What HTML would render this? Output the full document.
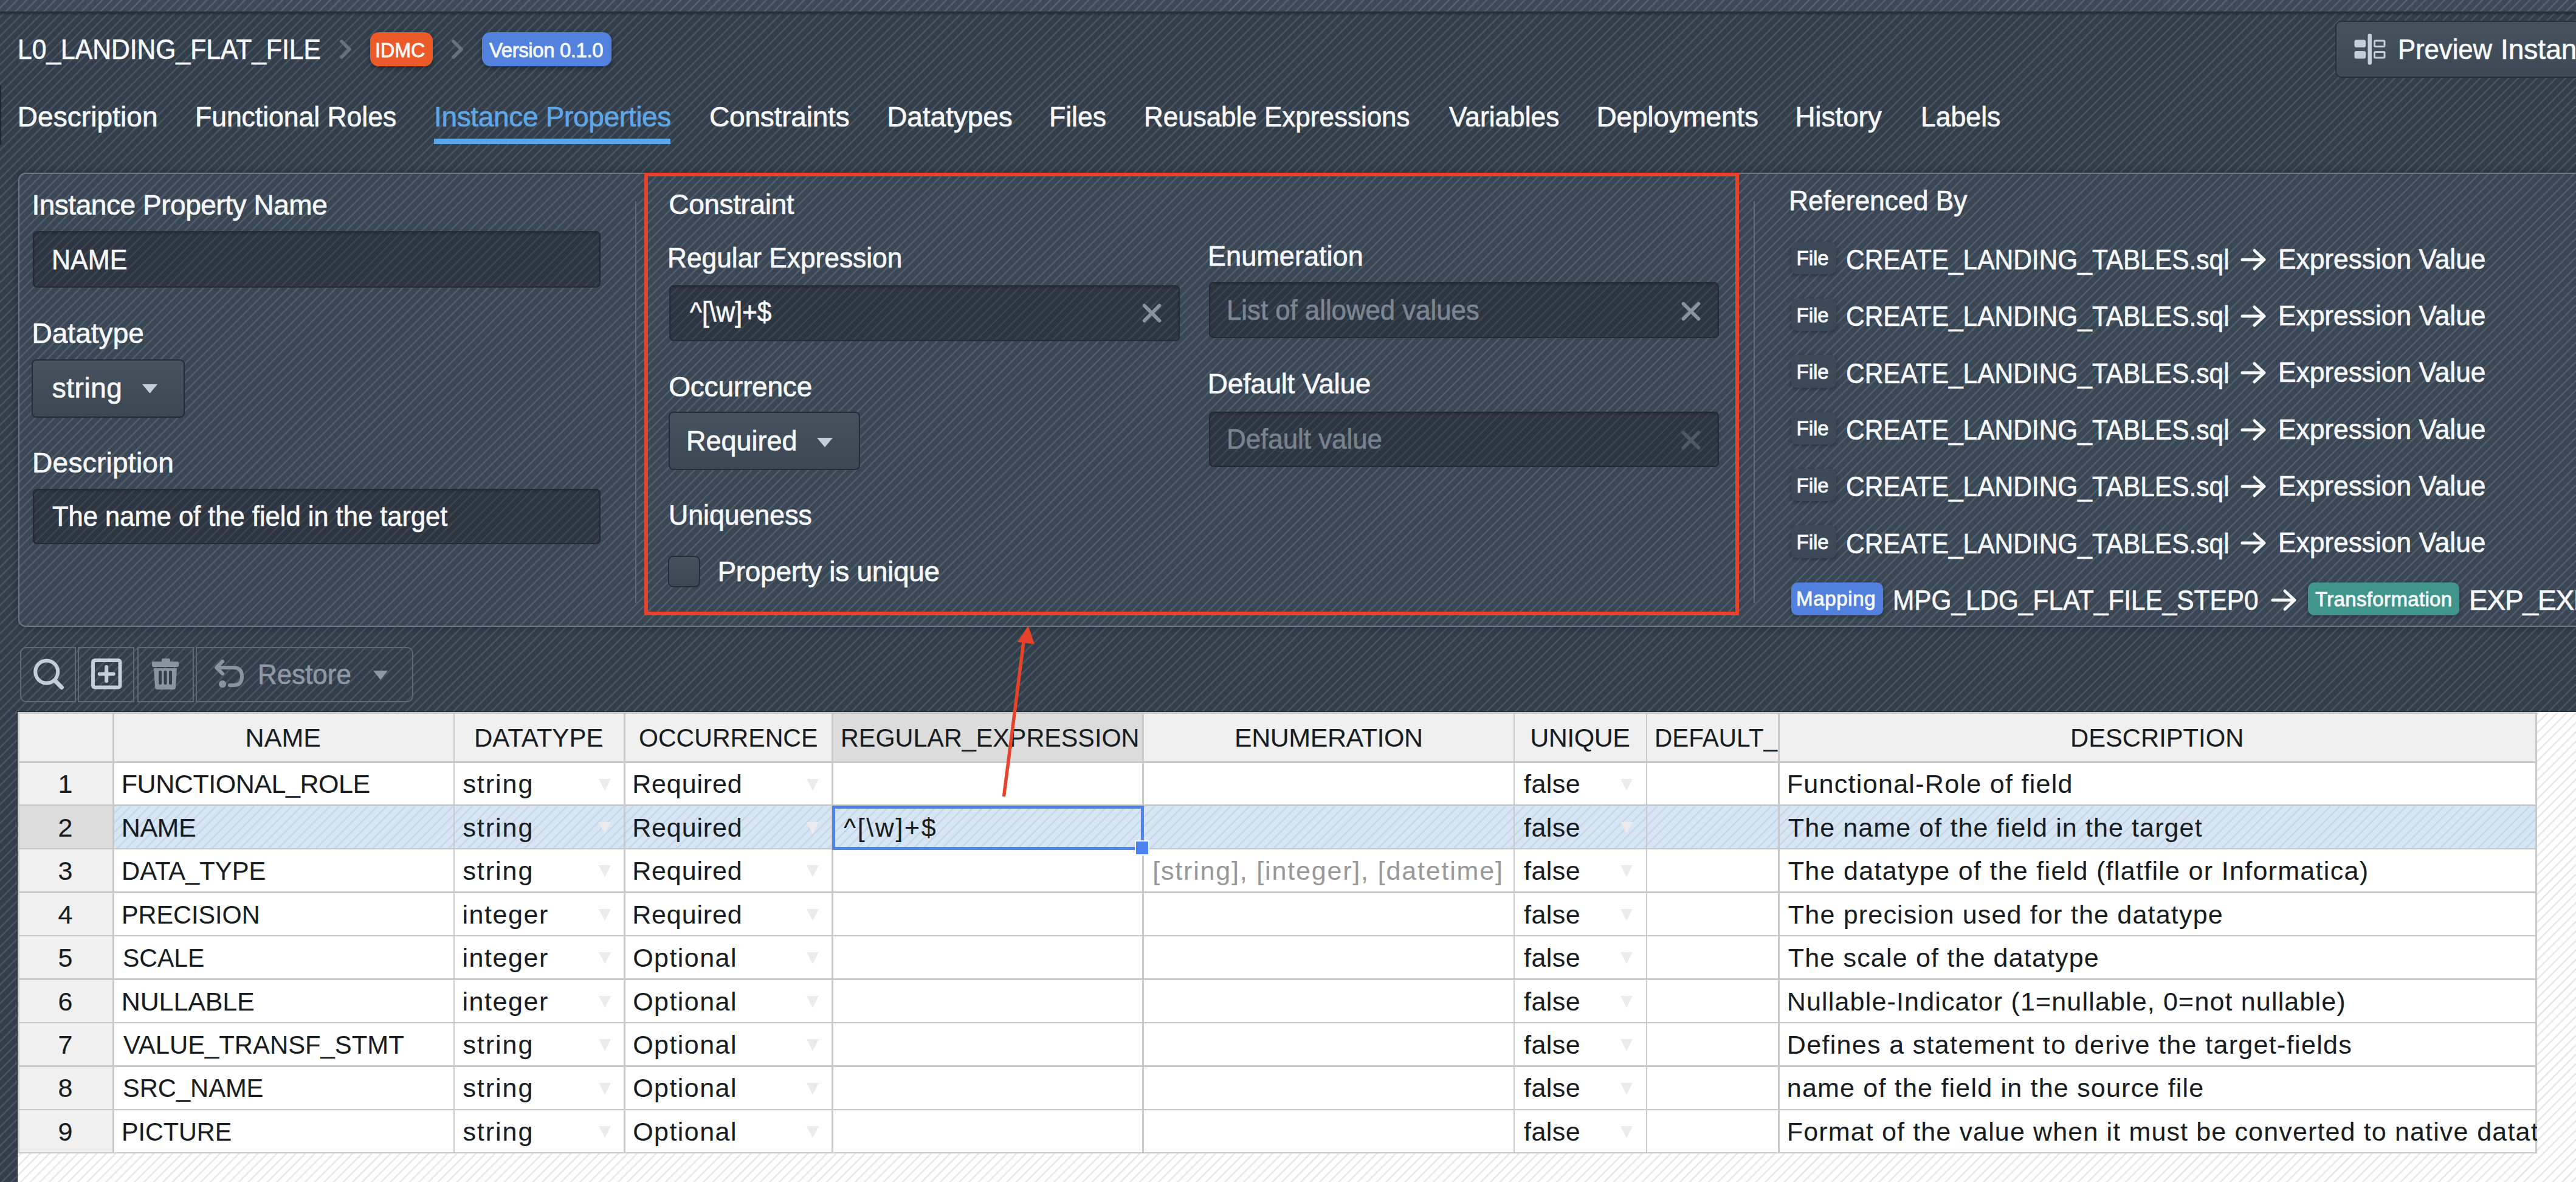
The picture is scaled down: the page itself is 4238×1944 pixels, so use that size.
<!DOCTYPE html>
<html><head><meta charset="utf-8">
<style>
*{box-sizing:border-box;margin:0;padding:0}
html,body{width:4238px;height:1944px;overflow:hidden}
body{position:relative;font-family:"Liberation Sans",sans-serif;color:#f5f7f9;background:#313d49}
.abs{position:absolute}
.t{position:absolute;white-space:pre;line-height:1;font-family:"Liberation Sans",sans-serif;-webkit-text-stroke:0.7px currentColor}
.k{-webkit-text-stroke:0.2px currentColor}
svg{position:absolute;overflow:visible}

</style></head><body>
<div class="abs" style="left:0.00px;top:0.00px;width:4238.00px;height:1944.00px;background-image:repeating-linear-gradient(135deg,#323e4a 0px,#323e4a 7.13px,#4a5663 8.53px,#4a5663 9.63px,#323e4a 11.03px);background-attachment:fixed;"></div>
<div class="abs" style="left:0.00px;top:0.00px;width:4238.00px;height:19.00px;background-image:repeating-linear-gradient(135deg,#3c4956 0px,#3c4956 7.13px,#56626e 8.53px,#56626e 9.63px,#3c4956 11.03px);background-attachment:fixed;"></div>
<div class="abs" style="left:0.00px;top:19.00px;width:4238.00px;height:2.50px;background:#28303a;box-shadow:0 1px 3px rgba(10,15,20,0.45);"></div>
<div class="abs" style="left:0.00px;top:140.00px;width:1.50px;height:98.00px;background:#1f2831;"></div>
<div class="t" style="left:29.00px;top:58.05px;font-size:46px;letter-spacing:0.000px;transform:scaleX(0.9262);transform-origin:0 0;">L0_LANDING_FLAT_FILE</div>
<svg style="left:558px;top:64px" width="22" height="34" viewBox="0 0 22 34"><path d="M4 4 L17 17 L4 30" fill="none" stroke="#66737f" stroke-width="5.5" stroke-linecap="round" stroke-linejoin="round"/></svg>
<svg style="left:742px;top:64px" width="22" height="34" viewBox="0 0 22 34"><path d="M4 4 L17 17 L4 30" fill="none" stroke="#66737f" stroke-width="5.5" stroke-linecap="round" stroke-linejoin="round"/></svg>
<div class="abs" style="left:609.00px;top:53.00px;width:103.00px;height:56.00px;background:#eb5a28;border-radius:14px;box-shadow:0 3px 8px rgba(0,0,0,0.35);"></div>
<div class="t" style="left:617.00px;top:66.06px;font-size:33px;letter-spacing:0.000px;transform:scaleX(0.9756);transform-origin:0 0;-webkit-text-stroke:0.9px currentColor;">IDMC</div>
<div class="abs" style="left:793.00px;top:53.00px;width:213.00px;height:56.00px;background:#5281de;border-radius:14px;box-shadow:0 3px 8px rgba(0,0,0,0.35);"></div>
<div class="t" style="left:805.00px;top:66.06px;font-size:33px;letter-spacing:-0.417px;-webkit-text-stroke:0.9px currentColor;">Version 0.1.0</div>
<div class="abs" style="left:3842.00px;top:34.00px;width:458.00px;height:94.00px;background:linear-gradient(#46535f,#3c4955);border:2px solid #28313a;border-radius:10px;"></div>
<svg style="left:3872px;top:55px" width="54" height="52" viewBox="0 0 54 52">
<rect x="1.5" y="10.5" width="18.5" height="12.5" rx="3" fill="#c5ced6"/>
<rect x="1.5" y="29" width="18.5" height="12.5" rx="3" fill="#c5ced6"/>
<rect x="23.5" y="0.5" width="6.5" height="51" rx="3" fill="#c5ced6"/>
<rect x="34.5" y="12" width="16.5" height="9.5" rx="1.5" fill="none" stroke="#c5ced6" stroke-width="3"/>
<rect x="34.5" y="30.5" width="16.5" height="9.5" rx="1.5" fill="none" stroke="#c5ced6" stroke-width="3"/>
</svg>
<div class="t" style="left:3945.00px;top:58.05px;font-size:46px;letter-spacing:0.000px;transform:scaleX(0.9481);transform-origin:0 0;">Preview</div>
<div class="t" style="left:4114.00px;top:58.05px;font-size:46px;letter-spacing:0.000px;">Instance</div>
<div class="t" style="left:28.80px;top:168.85px;font-size:46px;letter-spacing:0.060px;">Description</div>
<div class="t" style="left:321.30px;top:168.85px;font-size:46px;letter-spacing:0.000px;transform:scaleX(0.9664);transform-origin:0 0;">Functional Roles</div>
<div class="t" style="left:714.00px;top:168.85px;font-size:46px;letter-spacing:-0.333px;color:#5ea8e9;">Instance Properties</div>
<div class="t" style="left:1167.00px;top:168.85px;font-size:46px;letter-spacing:-0.200px;">Constraints</div>
<div class="t" style="left:1459.20px;top:168.85px;font-size:46px;letter-spacing:-0.075px;">Datatypes</div>
<div class="t" style="left:1726.00px;top:168.85px;font-size:46px;letter-spacing:0.000px;transform:scaleX(0.9677);transform-origin:0 0;">Files</div>
<div class="t" style="left:1881.50px;top:168.85px;font-size:46px;letter-spacing:0.000px;transform:scaleX(0.9560);transform-origin:0 0;">Reusable Expressions</div>
<div class="t" style="left:2384.00px;top:168.85px;font-size:46px;letter-spacing:0.000px;transform:scaleX(0.9630);transform-origin:0 0;">Variables</div>
<div class="t" style="left:2626.50px;top:168.85px;font-size:46px;letter-spacing:-0.200px;">Deployments</div>
<div class="t" style="left:2953.20px;top:168.85px;font-size:46px;letter-spacing:-0.095px;">History</div>
<div class="t" style="left:3159.90px;top:168.85px;font-size:46px;letter-spacing:0.000px;transform:scaleX(0.9687);transform-origin:0 0;">Labels</div>
<div class="abs" style="left:714.00px;top:227.50px;width:389.00px;height:9.50px;background:#5aa6e8;"></div>
<div class="abs" style="left:30.00px;top:284.00px;width:4270.00px;height:747.00px;background-image:repeating-linear-gradient(135deg,#394654 0px,#394654 7.13px,#525e6b 8.53px,#525e6b 9.63px,#394654 11.03px);background-attachment:fixed;border:2px solid #6b7783;border-radius:12px;box-shadow:0 0 14px rgba(10,16,22,0.35);"></div>
<div class="t" style="left:52.40px;top:313.85px;font-size:46px;letter-spacing:-0.460px;">Instance Property Name</div>
<div class="abs" style="left:53.50px;top:380.00px;width:934.50px;height:93.00px;background-image:repeating-linear-gradient(135deg,#2c3540 0px,#2c3540 7.13px,#3e4651 8.53px,#3e4651 9.63px,#2c3540 11.03px);background-attachment:fixed;border:2px solid #232b33;border-radius:7px;box-shadow:inset 0 2px 3px rgba(10,15,20,0.25);"></div>
<div class="t" style="left:85.20px;top:403.85px;font-size:46px;letter-spacing:0.000px;transform:scaleX(0.9355);transform-origin:0 0;">NAME</div>
<div class="t" style="left:52.40px;top:524.55px;font-size:46px;letter-spacing:0.052px;">Datatype</div>
<div class="abs" style="left:52.00px;top:591.00px;width:252.00px;height:96.00px;background:linear-gradient(#46535f,#3b4854);border:2px solid #252e37;border-radius:8px;"></div>
<div class="t" style="left:85.80px;top:614.85px;font-size:46px;letter-spacing:0.520px;">string</div>
<svg style="left:234px;top:632px" width="25" height="15" viewBox="0 0 25 15"><path d="M0 0 L25 0 L12.5 15 Z" fill="#c5ced6"/></svg>
<div class="t" style="left:53.10px;top:737.55px;font-size:46px;letter-spacing:0.260px;">Description</div>
<div class="abs" style="left:53.50px;top:804.00px;width:934.50px;height:91.00px;background-image:repeating-linear-gradient(135deg,#2c3540 0px,#2c3540 7.13px,#3e4651 8.53px,#3e4651 9.63px,#2c3540 11.03px);background-attachment:fixed;border:2px solid #232b33;border-radius:7px;box-shadow:inset 0 2px 3px rgba(10,15,20,0.25);"></div>
<div class="t" style="left:85.90px;top:826.25px;font-size:46px;letter-spacing:0.000px;transform:scaleX(0.9455);transform-origin:0 0;">The name of the field in the target</div>
<div class="abs" style="left:1044.50px;top:331.00px;width:2.00px;height:661.00px;background:#5f6b76;"></div>
<div class="abs" style="left:2884.50px;top:331.00px;width:2.00px;height:661.00px;background:#5f6b76;"></div>
<div class="t" style="left:1100.30px;top:312.85px;font-size:46px;letter-spacing:-0.368px;">Constraint</div>
<div class="t" style="left:1098.20px;top:400.65px;font-size:46px;letter-spacing:0.000px;transform:scaleX(0.9623);transform-origin:0 0;">Regular Expression</div>
<div class="abs" style="left:1101.40px;top:468.50px;width:839.60px;height:92.10px;background-image:repeating-linear-gradient(135deg,#2c3540 0px,#2c3540 7.13px,#3e4651 8.53px,#3e4651 9.63px,#2c3540 11.03px);background-attachment:fixed;border:2px solid #232b33;border-radius:7px;box-shadow:inset 0 2px 3px rgba(10,15,20,0.25);"></div>
<div class="t" style="left:1134.50px;top:489.55px;font-size:46px;letter-spacing:0.000px;transform:scaleX(0.9224);transform-origin:0 0;">^[\w]+$</div>
<svg style="left:1879px;top:498.5px" width="32" height="32" viewBox="0 0 32 32"><path d="M3.5 3.5 L28.5 28.5 M28.5 3.5 L3.5 28.5" stroke="#8794a0" stroke-width="5.8" stroke-linecap="round"/></svg>
<div class="t" style="left:1986.80px;top:398.05px;font-size:46px;letter-spacing:0.000px;transform:scaleX(0.9806);transform-origin:0 0;">Enumeration</div>
<div class="abs" style="left:1988.50px;top:464.20px;width:839.50px;height:91.80px;background-image:repeating-linear-gradient(135deg,#2c3540 0px,#2c3540 7.13px,#3e4651 8.53px,#3e4651 9.63px,#2c3540 11.03px);background-attachment:fixed;border:2px solid #232b33;border-radius:7px;box-shadow:inset 0 2px 3px rgba(10,15,20,0.25);"></div>
<div class="t" style="left:2017.50px;top:487.05px;font-size:46px;letter-spacing:0.000px;transform:scaleX(0.9509);transform-origin:0 0;color:#7a8792;">List of allowed values</div>
<svg style="left:2766px;top:496px" width="32" height="32" viewBox="0 0 32 32"><path d="M3.5 3.5 L28.5 28.5 M28.5 3.5 L3.5 28.5" stroke="#8794a0" stroke-width="5.8" stroke-linecap="round"/></svg>
<div class="t" style="left:1100.20px;top:613.35px;font-size:46px;letter-spacing:-0.192px;">Occurrence</div>
<div class="abs" style="left:1099.70px;top:677.30px;width:315.60px;height:96.20px;background:linear-gradient(#46535f,#3b4854);border:2px solid #252e37;border-radius:8px;"></div>
<div class="t" style="left:1129.00px;top:702.35px;font-size:46px;letter-spacing:0.000px;transform:scaleX(0.9780);transform-origin:0 0;">Required</div>
<svg style="left:1344.3px;top:720px" width="26" height="15.5" viewBox="0 0 26 15.5"><path d="M0 0 L26 0 L13.0 15.5 Z" fill="#c5ced6"/></svg>
<div class="t" style="left:1986.80px;top:608.45px;font-size:46px;letter-spacing:-0.362px;">Default Value</div>
<div class="abs" style="left:1988.50px;top:676.50px;width:839.50px;height:91.50px;background-image:repeating-linear-gradient(135deg,#2c3540 0px,#2c3540 7.13px,#3e4651 8.53px,#3e4651 9.63px,#2c3540 11.03px);background-attachment:fixed;border:2px solid #232b33;border-radius:7px;box-shadow:inset 0 2px 3px rgba(10,15,20,0.25);"></div>
<div class="t" style="left:2017.50px;top:699.25px;font-size:46px;letter-spacing:0.000px;transform:scaleX(0.9535);transform-origin:0 0;color:#76838e;">Default value</div>
<svg style="left:2766px;top:708px" width="32" height="32" viewBox="0 0 32 32"><path d="M3.5 3.5 L28.5 28.5 M28.5 3.5 L3.5 28.5" stroke="#4e5a66" stroke-width="5.8" stroke-linecap="round"/></svg>
<div class="t" style="left:1100.00px;top:823.55px;font-size:46px;letter-spacing:0.000px;transform:scaleX(0.9707);transform-origin:0 0;">Uniqueness</div>
<div class="abs" style="left:1098.70px;top:913.50px;width:53.40px;height:52.50px;background:linear-gradient(#46535f,#3b4854);border:2px solid #252e37;border-radius:9px;"></div>
<div class="t" style="left:1180.40px;top:916.85px;font-size:46px;letter-spacing:-0.294px;">Property is unique</div>
<div class="t" style="left:2943.00px;top:307.05px;font-size:46px;letter-spacing:0.000px;transform:scaleX(0.9642);transform-origin:0 0;">Referenced By</div>
<div class="abs" style="left:2946.80px;top:397.50px;width:74.00px;height:53.50px;background:#3b4958;border-radius:10px;box-shadow:0 2px 6px rgba(0,0,0,0.3);"></div>
<div class="t" style="left:2955.50px;top:408.26px;font-size:33px;letter-spacing:-0.000px;-webkit-text-stroke:0.9px currentColor;">File</div>
<div class="t" style="left:3037.10px;top:403.95px;font-size:46px;letter-spacing:0.000px;transform:scaleX(0.9227);transform-origin:0 0;">CREATE_LANDING_TABLES.sql</div>
<svg style="left:3686px;top:407.5px" width="44" height="38" viewBox="0 0 44 38"><path d="M3 19 L39 19 M23 4 L39 19 L23 34" fill="none" stroke="#f5f7f9" stroke-width="5" stroke-linecap="round" stroke-linejoin="round"/></svg>
<div class="t" style="left:3747.90px;top:402.65px;font-size:46px;letter-spacing:0.000px;transform:scaleX(0.9630);transform-origin:0 0;">Expression Value</div>
<div class="abs" style="left:2946.80px;top:490.86px;width:74.00px;height:53.50px;background:#3b4958;border-radius:10px;box-shadow:0 2px 6px rgba(0,0,0,0.3);"></div>
<div class="t" style="left:2955.50px;top:501.62px;font-size:33px;letter-spacing:-0.000px;-webkit-text-stroke:0.9px currentColor;">File</div>
<div class="t" style="left:3037.10px;top:497.31px;font-size:46px;letter-spacing:0.000px;transform:scaleX(0.9227);transform-origin:0 0;">CREATE_LANDING_TABLES.sql</div>
<svg style="left:3686px;top:500.86px" width="44" height="38" viewBox="0 0 44 38"><path d="M3 19 L39 19 M23 4 L39 19 L23 34" fill="none" stroke="#f5f7f9" stroke-width="5" stroke-linecap="round" stroke-linejoin="round"/></svg>
<div class="t" style="left:3747.90px;top:496.01px;font-size:46px;letter-spacing:0.000px;transform:scaleX(0.9630);transform-origin:0 0;">Expression Value</div>
<div class="abs" style="left:2946.80px;top:584.22px;width:74.00px;height:53.50px;background:#3b4958;border-radius:10px;box-shadow:0 2px 6px rgba(0,0,0,0.3);"></div>
<div class="t" style="left:2955.50px;top:594.98px;font-size:33px;letter-spacing:-0.000px;-webkit-text-stroke:0.9px currentColor;">File</div>
<div class="t" style="left:3037.10px;top:590.67px;font-size:46px;letter-spacing:0.000px;transform:scaleX(0.9227);transform-origin:0 0;">CREATE_LANDING_TABLES.sql</div>
<svg style="left:3686px;top:594.22px" width="44" height="38" viewBox="0 0 44 38"><path d="M3 19 L39 19 M23 4 L39 19 L23 34" fill="none" stroke="#f5f7f9" stroke-width="5" stroke-linecap="round" stroke-linejoin="round"/></svg>
<div class="t" style="left:3747.90px;top:589.37px;font-size:46px;letter-spacing:0.000px;transform:scaleX(0.9630);transform-origin:0 0;">Expression Value</div>
<div class="abs" style="left:2946.80px;top:677.58px;width:74.00px;height:53.50px;background:#3b4958;border-radius:10px;box-shadow:0 2px 6px rgba(0,0,0,0.3);"></div>
<div class="t" style="left:2955.50px;top:688.34px;font-size:33px;letter-spacing:-0.000px;-webkit-text-stroke:0.9px currentColor;">File</div>
<div class="t" style="left:3037.10px;top:684.03px;font-size:46px;letter-spacing:0.000px;transform:scaleX(0.9227);transform-origin:0 0;">CREATE_LANDING_TABLES.sql</div>
<svg style="left:3686px;top:687.58px" width="44" height="38" viewBox="0 0 44 38"><path d="M3 19 L39 19 M23 4 L39 19 L23 34" fill="none" stroke="#f5f7f9" stroke-width="5" stroke-linecap="round" stroke-linejoin="round"/></svg>
<div class="t" style="left:3747.90px;top:682.73px;font-size:46px;letter-spacing:0.000px;transform:scaleX(0.9630);transform-origin:0 0;">Expression Value</div>
<div class="abs" style="left:2946.80px;top:770.94px;width:74.00px;height:53.50px;background:#3b4958;border-radius:10px;box-shadow:0 2px 6px rgba(0,0,0,0.3);"></div>
<div class="t" style="left:2955.50px;top:781.70px;font-size:33px;letter-spacing:-0.000px;-webkit-text-stroke:0.9px currentColor;">File</div>
<div class="t" style="left:3037.10px;top:777.39px;font-size:46px;letter-spacing:0.000px;transform:scaleX(0.9227);transform-origin:0 0;">CREATE_LANDING_TABLES.sql</div>
<svg style="left:3686px;top:780.9399999999999px" width="44" height="38" viewBox="0 0 44 38"><path d="M3 19 L39 19 M23 4 L39 19 L23 34" fill="none" stroke="#f5f7f9" stroke-width="5" stroke-linecap="round" stroke-linejoin="round"/></svg>
<div class="t" style="left:3747.90px;top:776.09px;font-size:46px;letter-spacing:0.000px;transform:scaleX(0.9630);transform-origin:0 0;">Expression Value</div>
<div class="abs" style="left:2946.80px;top:864.30px;width:74.00px;height:53.50px;background:#3b4958;border-radius:10px;box-shadow:0 2px 6px rgba(0,0,0,0.3);"></div>
<div class="t" style="left:2955.50px;top:875.06px;font-size:33px;letter-spacing:-0.000px;-webkit-text-stroke:0.9px currentColor;">File</div>
<div class="t" style="left:3037.10px;top:870.75px;font-size:46px;letter-spacing:0.000px;transform:scaleX(0.9227);transform-origin:0 0;">CREATE_LANDING_TABLES.sql</div>
<svg style="left:3686px;top:874.3000000000001px" width="44" height="38" viewBox="0 0 44 38"><path d="M3 19 L39 19 M23 4 L39 19 L23 34" fill="none" stroke="#f5f7f9" stroke-width="5" stroke-linecap="round" stroke-linejoin="round"/></svg>
<div class="t" style="left:3747.90px;top:869.45px;font-size:46px;letter-spacing:0.000px;transform:scaleX(0.9630);transform-origin:0 0;">Expression Value</div>
<div class="abs" style="left:2946.80px;top:957.80px;width:151.20px;height:54.40px;background:#5180de;border-radius:10px;box-shadow:0 2px 6px rgba(0,0,0,0.3);"></div>
<div class="t" style="left:2955.00px;top:967.96px;font-size:33px;letter-spacing:0.667px;-webkit-text-stroke:0.9px currentColor;">Mapping</div>
<div class="t" style="left:3113.70px;top:963.75px;font-size:46px;letter-spacing:0.000px;transform:scaleX(0.9202);transform-origin:0 0;">MPG_LDG_FLAT_FILE_STEP0</div>
<svg style="left:3736px;top:967.5px" width="44" height="38" viewBox="0 0 44 38"><path d="M3 19 L39 19 M23 4 L39 19 L23 34" fill="none" stroke="#f5f7f9" stroke-width="5" stroke-linecap="round" stroke-linejoin="round"/></svg>
<div class="abs" style="left:3797.40px;top:957.80px;width:249.10px;height:54.50px;background:#40968a;border-radius:10px;box-shadow:0 2px 6px rgba(0,0,0,0.3);"></div>
<div class="t" style="left:3809.00px;top:969.46px;font-size:33px;letter-spacing:0.343px;-webkit-text-stroke:0.9px currentColor;">Transformation</div>
<div class="t" style="left:4062.10px;top:964.15px;font-size:46px;letter-spacing:-1.200px;">EXP_EXP</div>
<div class="abs" style="left:1060.00px;top:284.00px;width:1801.00px;height:727.60px;border:6px solid #e8432a;"></div>
<div class="abs" style="left:32.50px;top:1063.50px;width:92.50px;height:91.50px;border:2px solid #5d6974;border-radius:10px 0 0 10px;"></div>
<div class="abs" style="left:128.00px;top:1063.50px;width:93.00px;height:91.50px;border:2px solid #5d6974;"></div>
<div class="abs" style="left:226.00px;top:1063.50px;width:93.00px;height:91.50px;border:2px solid #5d6974;"></div>
<div class="abs" style="left:322.00px;top:1063.50px;width:358.00px;height:91.50px;border:2px solid #5d6974;border-radius:0 10px 10px 0;"></div>
<svg style="left:52px;top:1080px" width="56" height="56" viewBox="0 0 56 56">
<circle cx="24.7" cy="25" r="18.5" fill="none" stroke="#c5ced6" stroke-width="6"/>
<path d="M38 39 L49.5 50.5" stroke="#c5ced6" stroke-width="7" stroke-linecap="round"/></svg>
<svg style="left:150px;top:1083px" width="52" height="52" viewBox="0 0 52 52">
<rect x="3" y="3" width="44.5" height="44.5" rx="3" fill="none" stroke="#c5ced6" stroke-width="6"/>
<path d="M25.2 14 L25.2 37 M13.7 25.5 L36.7 25.5" stroke="#c5ced6" stroke-width="6" stroke-linecap="round"/></svg>
<svg style="left:250px;top:1083px" width="46" height="52" viewBox="0 0 46 52">
<rect x="16" y="0" width="14" height="6" rx="2" fill="#8894a0"/>
<rect x="0" y="5" width="44" height="9" rx="2.5" fill="#8894a0"/>
<path d="M3 16 H41 L39 47 Q39 51 35 51 H9 Q5 51 5 47 Z" fill="#8894a0"/>
<rect x="11" y="20" width="5" height="23" rx="2.5" fill="#323e4a"/>
<rect x="19.5" y="20" width="5" height="23" rx="2.5" fill="#323e4a"/>
<rect x="28" y="20" width="5" height="23" rx="2.5" fill="#323e4a"/>
</svg>
<svg style="left:352px;top:1085px" width="52" height="48" viewBox="0 0 52 48">
<path d="M14 3 L4 13 L14 23" fill="none" stroke="#8894a0" stroke-width="6" stroke-linecap="round" stroke-linejoin="round"/>
<path d="M5 13 H32 Q46 13 46 27.5 Q46 42 32 42 H26" fill="none" stroke="#8894a0" stroke-width="6" stroke-linecap="round"/>
<circle cx="14" cy="40" r="6" fill="#8894a0"/></svg>
<div class="t" style="left:424.00px;top:1086.05px;font-size:46px;letter-spacing:0.000px;transform:scaleX(0.9554);transform-origin:0 0;color:#8d98a3;">Restore</div>
<svg style="left:614px;top:1102.5px" width="24" height="15" viewBox="0 0 24 15"><path d="M0 0 L24 0 L12.0 15 Z" fill="#8d98a3"/></svg>
<div class="abs" style="left:27.50px;top:1169.50px;width:4210.50px;height:774.50px;background:#1f2a35;"></div>
<div class="abs" style="left:29.00px;top:1171.00px;width:4209.00px;height:773.00px;background-image:repeating-linear-gradient(135deg,#ffffff 0px,#ffffff 7.13px,#e6e6e6 8.53px,#e6e6e6 9.63px,#ffffff 11.03px);background-attachment:fixed;"></div>
<div class="abs" style="left:29.00px;top:1171.00px;width:4143.40px;height:82.00px;background:#f0f0f0;"></div>
<div class="abs" style="left:1369.00px;top:1171.00px;width:511.40px;height:82.00px;background:#dcdcdc;"></div>
<div class="abs" style="left:29.00px;top:1253.00px;width:157.00px;height:642.96px;background:#f0f0f0;"></div>
<div class="abs" style="left:186.00px;top:1253.00px;width:3986.40px;height:642.96px;background:#ffffff;"></div>
<div class="abs" style="left:29.00px;top:1324.44px;width:157.00px;height:71.44px;background:#dcdcdc;"></div>
<div class="abs" style="left:186.00px;top:1324.44px;width:3986.40px;height:71.44px;background-image:repeating-linear-gradient(135deg,#d7e6f4 0px,#d7e6f4 7.13px,#c6d6e4 8.53px,#c6d6e4 9.63px,#d7e6f4 11.03px);background-attachment:fixed;"></div>
<div class="abs" style="left:29.00px;top:1171.00px;width:4145.40px;height:2.50px;background:#c9c9c9;"></div>
<div class="abs" style="left:29.00px;top:1171.00px;width:3.00px;height:726.46px;background:#c9c9c9;"></div>
<div class="abs" style="left:185.00px;top:1171.00px;width:2.50px;height:726.46px;background:#c9c9c9;"></div>
<div class="abs" style="left:745.70px;top:1171.00px;width:2.50px;height:726.46px;background:#c9c9c9;"></div>
<div class="abs" style="left:1026.00px;top:1171.00px;width:2.50px;height:726.46px;background:#c9c9c9;"></div>
<div class="abs" style="left:1368.00px;top:1171.00px;width:2.50px;height:726.46px;background:#c9c9c9;"></div>
<div class="abs" style="left:1879.40px;top:1171.00px;width:2.50px;height:726.46px;background:#c9c9c9;"></div>
<div class="abs" style="left:2489.80px;top:1171.00px;width:2.50px;height:726.46px;background:#c9c9c9;"></div>
<div class="abs" style="left:2707.60px;top:1171.00px;width:2.50px;height:726.46px;background:#c9c9c9;"></div>
<div class="abs" style="left:2925.40px;top:1171.00px;width:2.50px;height:726.46px;background:#c9c9c9;"></div>
<div class="abs" style="left:4171.40px;top:1171.00px;width:2.50px;height:726.46px;background:#c9c9c9;"></div>
<div class="abs" style="left:29.00px;top:1252.00px;width:4144.90px;height:2.50px;background:#c9c9c9;"></div>
<div class="abs" style="left:29.00px;top:1323.44px;width:4144.90px;height:2.50px;background:#c9c9c9;"></div>
<div class="abs" style="left:29.00px;top:1394.88px;width:4144.90px;height:2.50px;background:#c9c9c9;"></div>
<div class="abs" style="left:29.00px;top:1466.32px;width:4144.90px;height:2.50px;background:#c9c9c9;"></div>
<div class="abs" style="left:29.00px;top:1537.76px;width:4144.90px;height:2.50px;background:#c9c9c9;"></div>
<div class="abs" style="left:29.00px;top:1609.20px;width:4144.90px;height:2.50px;background:#c9c9c9;"></div>
<div class="abs" style="left:29.00px;top:1680.64px;width:4144.90px;height:2.50px;background:#c9c9c9;"></div>
<div class="abs" style="left:29.00px;top:1752.08px;width:4144.90px;height:2.50px;background:#c9c9c9;"></div>
<div class="abs" style="left:29.00px;top:1823.52px;width:4144.90px;height:2.50px;background:#c9c9c9;"></div>
<div class="abs" style="left:29.00px;top:1894.96px;width:4144.90px;height:2.50px;background:#c9c9c9;"></div>
<div class="t" style="left:403.60px;top:1192.49px;font-size:43px;letter-spacing:0.072px;color:#181d22;-webkit-text-stroke:0.1px currentColor;">NAME</div>
<div class="t" style="left:780.40px;top:1192.49px;font-size:43px;letter-spacing:0.000px;transform:scaleX(0.9771);transform-origin:0 0;color:#181d22;-webkit-text-stroke:0.1px currentColor;">DATATYPE</div>
<div class="t" style="left:1051.00px;top:1192.49px;font-size:43px;letter-spacing:0.000px;transform:scaleX(0.9551);transform-origin:0 0;color:#181d22;-webkit-text-stroke:0.1px currentColor;">OCCURRENCE</div>
<div class="t" style="left:1383.10px;top:1192.49px;font-size:43px;letter-spacing:0.000px;transform:scaleX(0.9609);transform-origin:0 0;color:#181d22;-webkit-text-stroke:0.1px currentColor;">REGULAR_EXPRESSION</div>
<div class="t" style="left:2030.90px;top:1192.49px;font-size:43px;letter-spacing:-0.440px;color:#181d22;-webkit-text-stroke:0.1px currentColor;">ENUMERATION</div>
<div class="t" style="left:2517.20px;top:1192.49px;font-size:43px;letter-spacing:-0.480px;color:#181d22;-webkit-text-stroke:0.1px currentColor;">UNIQUE</div>
<div class="t" style="left:2721.50px;top:1192.49px;font-size:43px;letter-spacing:0.000px;transform:scaleX(0.9425);transform-origin:0 0;color:#181d22;-webkit-text-stroke:0.1px currentColor;">DEFAULT_</div>
<div class="t" style="left:3406.40px;top:1192.49px;font-size:43px;letter-spacing:0.000px;transform:scaleX(0.9708);transform-origin:0 0;color:#181d22;-webkit-text-stroke:0.1px currentColor;">DESCRIPTION</div>
<div class="t k" style="left:29px;top:1268.39px;width:157px;text-align:center;font-size:43px;color:#181d22">1</div>
<div class="t" style="left:199.80px;top:1268.39px;font-size:43px;letter-spacing:-0.453px;color:#181d22;-webkit-text-stroke:0.1px currentColor;">FUNCTIONAL_ROLE</div>
<div class="t" style="left:761.40px;top:1268.39px;font-size:43px;letter-spacing:1.960px;color:#181d22;-webkit-text-stroke:0.1px currentColor;">string</div>
<svg style="left:984.5px;top:1280.5px" width="20" height="19.5" viewBox="0 0 20 19.5"><path d="M0 0 L20 0 L10.0 19.5 Z" fill="#ebebeb"/></svg>
<div class="t" style="left:1040.20px;top:1268.39px;font-size:43px;letter-spacing:0.857px;color:#181d22;-webkit-text-stroke:0.1px currentColor;">Required</div>
<svg style="left:1326.5px;top:1280.5px" width="20" height="19.5" viewBox="0 0 20 19.5"><path d="M0 0 L20 0 L10.0 19.5 Z" fill="#ebebeb"/></svg>
<div class="t" style="left:2507.00px;top:1268.39px;font-size:43px;letter-spacing:0.450px;color:#181d22;-webkit-text-stroke:0.1px currentColor;">false</div>
<svg style="left:2666.1px;top:1280.5px" width="20" height="19.5" viewBox="0 0 20 19.5"><path d="M0 0 L20 0 L10.0 19.5 Z" fill="#ebebeb"/></svg>
<div class="t" style="left:2939.80px;top:1268.39px;font-size:43px;letter-spacing:1.301px;color:#181d22;-webkit-text-stroke:0.1px currentColor;">Functional-Role of field</div>
<div class="t k" style="left:29px;top:1339.83px;width:157px;text-align:center;font-size:43px;color:#181d22">2</div>
<div class="t" style="left:199.80px;top:1339.83px;font-size:43px;letter-spacing:-0.462px;color:#181d22;-webkit-text-stroke:0.1px currentColor;">NAME</div>
<div class="t" style="left:761.40px;top:1339.83px;font-size:43px;letter-spacing:1.960px;color:#181d22;-webkit-text-stroke:0.1px currentColor;">string</div>
<svg style="left:984.5px;top:1351.94px" width="20" height="19.5" viewBox="0 0 20 19.5"><path d="M0 0 L20 0 L10.0 19.5 Z" fill="#ebebeb"/></svg>
<div class="t" style="left:1040.20px;top:1339.83px;font-size:43px;letter-spacing:0.857px;color:#181d22;-webkit-text-stroke:0.1px currentColor;">Required</div>
<svg style="left:1326.5px;top:1351.94px" width="20" height="19.5" viewBox="0 0 20 19.5"><path d="M0 0 L20 0 L10.0 19.5 Z" fill="#ebebeb"/></svg>
<div class="t" style="left:1387.90px;top:1339.83px;font-size:43px;letter-spacing:2.631px;color:#181d22;-webkit-text-stroke:0.1px currentColor;">^[\w]+$</div>
<div class="t" style="left:2507.00px;top:1339.83px;font-size:43px;letter-spacing:0.450px;color:#181d22;-webkit-text-stroke:0.1px currentColor;">false</div>
<svg style="left:2666.1px;top:1351.94px" width="20" height="19.5" viewBox="0 0 20 19.5"><path d="M0 0 L20 0 L10.0 19.5 Z" fill="#ebebeb"/></svg>
<div class="t" style="left:2941.80px;top:1339.83px;font-size:43px;letter-spacing:1.111px;color:#181d22;-webkit-text-stroke:0.1px currentColor;">The name of the field in the target</div>
<div class="t k" style="left:29px;top:1411.27px;width:157px;text-align:center;font-size:43px;color:#181d22">3</div>
<div class="t" style="left:199.80px;top:1411.27px;font-size:43px;letter-spacing:0.000px;transform:scaleX(0.9706);transform-origin:0 0;color:#181d22;-webkit-text-stroke:0.1px currentColor;">DATA_TYPE</div>
<div class="t" style="left:761.40px;top:1411.27px;font-size:43px;letter-spacing:1.960px;color:#181d22;-webkit-text-stroke:0.1px currentColor;">string</div>
<svg style="left:984.5px;top:1423.38px" width="20" height="19.5" viewBox="0 0 20 19.5"><path d="M0 0 L20 0 L10.0 19.5 Z" fill="#ebebeb"/></svg>
<div class="t" style="left:1040.20px;top:1411.27px;font-size:43px;letter-spacing:0.857px;color:#181d22;-webkit-text-stroke:0.1px currentColor;">Required</div>
<svg style="left:1326.5px;top:1423.38px" width="20" height="19.5" viewBox="0 0 20 19.5"><path d="M0 0 L20 0 L10.0 19.5 Z" fill="#ebebeb"/></svg>
<div class="t" style="left:1896.20px;top:1411.27px;font-size:43px;letter-spacing:1.822px;color:#999999;-webkit-text-stroke:0.1px currentColor;">[string], [integer], [datetime]</div>
<div class="t" style="left:2507.00px;top:1411.27px;font-size:43px;letter-spacing:0.450px;color:#181d22;-webkit-text-stroke:0.1px currentColor;">false</div>
<svg style="left:2666.1px;top:1423.38px" width="20" height="19.5" viewBox="0 0 20 19.5"><path d="M0 0 L20 0 L10.0 19.5 Z" fill="#ebebeb"/></svg>
<div class="t" style="left:2941.80px;top:1411.27px;font-size:43px;letter-spacing:1.302px;color:#181d22;-webkit-text-stroke:0.1px currentColor;">The datatype of the field (flatfile or Informatica)</div>
<div class="t k" style="left:29px;top:1482.71px;width:157px;text-align:center;font-size:43px;color:#181d22">4</div>
<div class="t" style="left:199.80px;top:1482.71px;font-size:43px;letter-spacing:0.000px;transform:scaleX(0.9623);transform-origin:0 0;color:#181d22;-webkit-text-stroke:0.1px currentColor;">PRECISION</div>
<div class="t" style="left:760.40px;top:1482.71px;font-size:43px;letter-spacing:1.567px;color:#181d22;-webkit-text-stroke:0.1px currentColor;">integer</div>
<svg style="left:984.5px;top:1494.82px" width="20" height="19.5" viewBox="0 0 20 19.5"><path d="M0 0 L20 0 L10.0 19.5 Z" fill="#ebebeb"/></svg>
<div class="t" style="left:1040.20px;top:1482.71px;font-size:43px;letter-spacing:0.857px;color:#181d22;-webkit-text-stroke:0.1px currentColor;">Required</div>
<svg style="left:1326.5px;top:1494.82px" width="20" height="19.5" viewBox="0 0 20 19.5"><path d="M0 0 L20 0 L10.0 19.5 Z" fill="#ebebeb"/></svg>
<div class="t" style="left:2507.00px;top:1482.71px;font-size:43px;letter-spacing:0.450px;color:#181d22;-webkit-text-stroke:0.1px currentColor;">false</div>
<svg style="left:2666.1px;top:1494.82px" width="20" height="19.5" viewBox="0 0 20 19.5"><path d="M0 0 L20 0 L10.0 19.5 Z" fill="#ebebeb"/></svg>
<div class="t" style="left:2941.80px;top:1482.71px;font-size:43px;letter-spacing:1.200px;color:#181d22;-webkit-text-stroke:0.1px currentColor;">The precision used for the datatype</div>
<div class="t k" style="left:29px;top:1554.15px;width:157px;text-align:center;font-size:43px;color:#181d22">5</div>
<div class="t" style="left:201.80px;top:1554.15px;font-size:43px;letter-spacing:0.000px;transform:scaleX(0.9527);transform-origin:0 0;color:#181d22;-webkit-text-stroke:0.1px currentColor;">SCALE</div>
<div class="t" style="left:760.40px;top:1554.15px;font-size:43px;letter-spacing:1.567px;color:#181d22;-webkit-text-stroke:0.1px currentColor;">integer</div>
<svg style="left:984.5px;top:1566.26px" width="20" height="19.5" viewBox="0 0 20 19.5"><path d="M0 0 L20 0 L10.0 19.5 Z" fill="#ebebeb"/></svg>
<div class="t" style="left:1041.20px;top:1554.15px;font-size:43px;letter-spacing:1.455px;color:#181d22;-webkit-text-stroke:0.1px currentColor;">Optional</div>
<svg style="left:1326.5px;top:1566.26px" width="20" height="19.5" viewBox="0 0 20 19.5"><path d="M0 0 L20 0 L10.0 19.5 Z" fill="#ebebeb"/></svg>
<div class="t" style="left:2507.00px;top:1554.15px;font-size:43px;letter-spacing:0.450px;color:#181d22;-webkit-text-stroke:0.1px currentColor;">false</div>
<svg style="left:2666.1px;top:1566.26px" width="20" height="19.5" viewBox="0 0 20 19.5"><path d="M0 0 L20 0 L10.0 19.5 Z" fill="#ebebeb"/></svg>
<div class="t" style="left:2941.80px;top:1554.15px;font-size:43px;letter-spacing:1.171px;color:#181d22;-webkit-text-stroke:0.1px currentColor;">The scale of the datatype</div>
<div class="t k" style="left:29px;top:1625.59px;width:157px;text-align:center;font-size:43px;color:#181d22">6</div>
<div class="t" style="left:199.80px;top:1625.59px;font-size:43px;letter-spacing:-0.142px;color:#181d22;-webkit-text-stroke:0.1px currentColor;">NULLABLE</div>
<div class="t" style="left:760.40px;top:1625.59px;font-size:43px;letter-spacing:1.567px;color:#181d22;-webkit-text-stroke:0.1px currentColor;">integer</div>
<svg style="left:984.5px;top:1637.7px" width="20" height="19.5" viewBox="0 0 20 19.5"><path d="M0 0 L20 0 L10.0 19.5 Z" fill="#ebebeb"/></svg>
<div class="t" style="left:1041.20px;top:1625.59px;font-size:43px;letter-spacing:1.455px;color:#181d22;-webkit-text-stroke:0.1px currentColor;">Optional</div>
<svg style="left:1326.5px;top:1637.7px" width="20" height="19.5" viewBox="0 0 20 19.5"><path d="M0 0 L20 0 L10.0 19.5 Z" fill="#ebebeb"/></svg>
<div class="t" style="left:2507.00px;top:1625.59px;font-size:43px;letter-spacing:0.450px;color:#181d22;-webkit-text-stroke:0.1px currentColor;">false</div>
<svg style="left:2666.1px;top:1637.7px" width="20" height="19.5" viewBox="0 0 20 19.5"><path d="M0 0 L20 0 L10.0 19.5 Z" fill="#ebebeb"/></svg>
<div class="t" style="left:2939.80px;top:1625.59px;font-size:43px;letter-spacing:1.163px;color:#181d22;-webkit-text-stroke:0.1px currentColor;">Nullable-Indicator (1=nullable, 0=not nullable)</div>
<div class="t k" style="left:29px;top:1697.03px;width:157px;text-align:center;font-size:43px;color:#181d22">7</div>
<div class="t" style="left:202.80px;top:1697.03px;font-size:43px;letter-spacing:0.000px;transform:scaleX(0.9726);transform-origin:0 0;color:#181d22;-webkit-text-stroke:0.1px currentColor;">VALUE_TRANSF_STMT</div>
<div class="t" style="left:761.40px;top:1697.03px;font-size:43px;letter-spacing:1.960px;color:#181d22;-webkit-text-stroke:0.1px currentColor;">string</div>
<svg style="left:984.5px;top:1709.1399999999999px" width="20" height="19.5" viewBox="0 0 20 19.5"><path d="M0 0 L20 0 L10.0 19.5 Z" fill="#ebebeb"/></svg>
<div class="t" style="left:1041.20px;top:1697.03px;font-size:43px;letter-spacing:1.455px;color:#181d22;-webkit-text-stroke:0.1px currentColor;">Optional</div>
<svg style="left:1326.5px;top:1709.1399999999999px" width="20" height="19.5" viewBox="0 0 20 19.5"><path d="M0 0 L20 0 L10.0 19.5 Z" fill="#ebebeb"/></svg>
<div class="t" style="left:2507.00px;top:1697.03px;font-size:43px;letter-spacing:0.450px;color:#181d22;-webkit-text-stroke:0.1px currentColor;">false</div>
<svg style="left:2666.1px;top:1709.1399999999999px" width="20" height="19.5" viewBox="0 0 20 19.5"><path d="M0 0 L20 0 L10.0 19.5 Z" fill="#ebebeb"/></svg>
<div class="t" style="left:2939.80px;top:1697.03px;font-size:43px;letter-spacing:1.335px;color:#181d22;-webkit-text-stroke:0.1px currentColor;">Defines a statement to derive the target-fields</div>
<div class="t k" style="left:29px;top:1768.47px;width:157px;text-align:center;font-size:43px;color:#181d22">8</div>
<div class="t" style="left:201.80px;top:1768.47px;font-size:43px;letter-spacing:0.000px;transform:scaleX(0.9684);transform-origin:0 0;color:#181d22;-webkit-text-stroke:0.1px currentColor;">SRC_NAME</div>
<div class="t" style="left:761.40px;top:1768.47px;font-size:43px;letter-spacing:1.960px;color:#181d22;-webkit-text-stroke:0.1px currentColor;">string</div>
<svg style="left:984.5px;top:1780.58px" width="20" height="19.5" viewBox="0 0 20 19.5"><path d="M0 0 L20 0 L10.0 19.5 Z" fill="#ebebeb"/></svg>
<div class="t" style="left:1041.20px;top:1768.47px;font-size:43px;letter-spacing:1.455px;color:#181d22;-webkit-text-stroke:0.1px currentColor;">Optional</div>
<svg style="left:1326.5px;top:1780.58px" width="20" height="19.5" viewBox="0 0 20 19.5"><path d="M0 0 L20 0 L10.0 19.5 Z" fill="#ebebeb"/></svg>
<div class="t" style="left:2507.00px;top:1768.47px;font-size:43px;letter-spacing:0.450px;color:#181d22;-webkit-text-stroke:0.1px currentColor;">false</div>
<svg style="left:2666.1px;top:1780.58px" width="20" height="19.5" viewBox="0 0 20 19.5"><path d="M0 0 L20 0 L10.0 19.5 Z" fill="#ebebeb"/></svg>
<div class="t" style="left:2939.80px;top:1768.47px;font-size:43px;letter-spacing:1.213px;color:#181d22;-webkit-text-stroke:0.1px currentColor;">name of the field in the source file</div>
<div class="t k" style="left:29px;top:1839.91px;width:157px;text-align:center;font-size:43px;color:#181d22">9</div>
<div class="t" style="left:199.80px;top:1839.91px;font-size:43px;letter-spacing:0.000px;transform:scaleX(0.9599);transform-origin:0 0;color:#181d22;-webkit-text-stroke:0.1px currentColor;">PICTURE</div>
<div class="t" style="left:761.40px;top:1839.91px;font-size:43px;letter-spacing:1.960px;color:#181d22;-webkit-text-stroke:0.1px currentColor;">string</div>
<svg style="left:984.5px;top:1852.02px" width="20" height="19.5" viewBox="0 0 20 19.5"><path d="M0 0 L20 0 L10.0 19.5 Z" fill="#ebebeb"/></svg>
<div class="t" style="left:1041.20px;top:1839.91px;font-size:43px;letter-spacing:1.455px;color:#181d22;-webkit-text-stroke:0.1px currentColor;">Optional</div>
<svg style="left:1326.5px;top:1852.02px" width="20" height="19.5" viewBox="0 0 20 19.5"><path d="M0 0 L20 0 L10.0 19.5 Z" fill="#ebebeb"/></svg>
<div class="t" style="left:2507.00px;top:1839.91px;font-size:43px;letter-spacing:0.450px;color:#181d22;-webkit-text-stroke:0.1px currentColor;">false</div>
<svg style="left:2666.1px;top:1852.02px" width="20" height="19.5" viewBox="0 0 20 19.5"><path d="M0 0 L20 0 L10.0 19.5 Z" fill="#ebebeb"/></svg>
<div class="t" style="left:2939.80px;top:1839.91px;font-size:43px;letter-spacing:1.144px;color:#181d22;-webkit-text-stroke:0.1px currentColor;">Format of the value when it must be converted to native</div>
<div class="t" style="left:4075.20px;top:1839.91px;font-size:43px;letter-spacing:1.200px;color:#181d22;-webkit-text-stroke:0.1px currentColor;">datatype</div>
<div class="abs" style="left:4173.50px;top:1171.00px;width:64.50px;height:773.00px;background-image:repeating-linear-gradient(135deg,#ffffff 0px,#ffffff 7.13px,#e6e6e6 8.53px,#e6e6e6 9.63px,#ffffff 11.03px);background-attachment:fixed;"></div>
<div class="abs" style="left:1369.00px;top:1324.50px;width:512.50px;height:73.50px;border:5px solid #4b84f0;"></div>
<div class="abs" style="left:1866.50px;top:1382.00px;width:24.50px;height:25.00px;background:#4b84f0;border:2.5px solid #ffffff;"></div>
<svg style="left:0;top:0" width="4238" height="1944" viewBox="0 0 4238 1944">
<path d="M1651.5 1310 L1684 1056" stroke="#e8432a" stroke-width="5.5" fill="none"/>
<path d="M1691.6 1029 L1674 1056 L1702 1059.5 Z" fill="#e8432a"/></svg>
</body></html>
